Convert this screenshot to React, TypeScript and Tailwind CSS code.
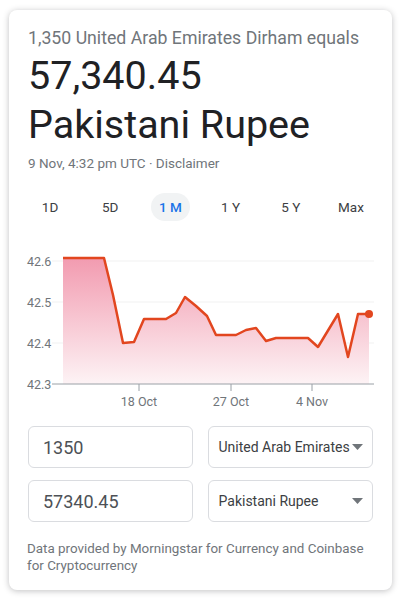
const tabs = ["1D", "5D", "1 M", "1 Y", "5 Y", "Max"];

// chart points in page coords; svg origin sits at page x=20, y=250
const pts: [number, number][] = [
  [63, 259], [104, 259], [113, 296], [123, 344], [134, 343], [144, 320],
  [166, 320], [176, 314], [185, 298], [196, 307], [207, 317], [216, 336],
  [236, 336], [246, 331], [256, 329], [266, 342], [276, 339], [308, 339],
  [318, 348], [338, 315], [348, 358], [358, 315], [369, 315],
];

const ox = 20;
const oy = 250;

function Chart() {
  const line = pts.map(([x, y]) => `${x - ox},${y - oy}`).join(" ");
  const area = `${63 - ox},${385 - oy} ${line} ${369 - ox},${385 - oy}`;
  const grid = [
    { v: "42.6", y: 262 },
    { v: "42.5", y: 303 },
    { v: "42.4", y: 344 },
  ];
  const ticks = [
    { l: "18 Oct", x: 139 },
    { l: "27 Oct", x: 231 },
    { l: "4 Nov", x: 312 },
  ];
  return (
    <svg width="361" height="165" className="block" style={{ fontFamily: "Roboto, Arial, sans-serif" }}>
      <defs>
        <linearGradient id="fill" x1="0" y1="0" x2="0" y2="1">
          <stop offset="0%" stopColor="#f29bb0" />
          <stop offset="100%" stopColor="#fdf3f5" />
        </linearGradient>
      </defs>
      {grid.map((g) => (
        <g key={g.v}>
          <line x1={52 - ox} x2={374 - ox} y1={g.y - oy} y2={g.y - oy} stroke="#f1f1f1" strokeWidth="1" />
          <text x={27 - ox} y={g.y - oy + 4.5} fontSize="12.5" fill="#70757a">{g.v}</text>
        </g>
      ))}
      <polygon points={area} fill="url(#fill)" />
      <line x1={52 - ox} x2={374 - ox} y1={385 - oy} y2={385 - oy} stroke="#9aa0a6" strokeWidth="1" />
      <text x={27 - ox} y={385 - oy + 4.5} fontSize="12.5" fill="#70757a">42.3</text>
      {ticks.map((t) => (
        <g key={t.l}>
          <line x1={t.x - ox} x2={t.x - ox} y1={385 - oy} y2={392 - oy} stroke="#9aa0a6" strokeWidth="1" />
          <text x={t.x - ox} y={407 - oy} fontSize="12.5" fill="#70757a" textAnchor="middle">{t.l}</text>
        </g>
      ))}
      <polyline points={line} fill="none" stroke="#e2461f" strokeWidth="2.5" strokeLinejoin="round" />
      <circle cx={369 - ox} cy={315 - oy} r="4" fill="#e2461f" />
    </svg>
  );
}

function Field({ value }: { value: string }) {
  return (
    <div className="flex h-[42px] w-[165px] items-center rounded-md border border-[#dadce0] px-[14px] text-[18px] text-[#4d5156]">
      {value}
    </div>
  );
}

function Select({ value }: { value: string }) {
  return (
    <div className="flex h-[42px] w-[166px] items-center justify-between rounded-md border border-[#dadce0] pl-[10px] pr-[9px] text-[14px] text-[#3c4043]">
      <span className="whitespace-nowrap">{value}</span>
      <svg width="11" height="6" viewBox="0 0 11 6" className="shrink-0">
        <polygon points="0,0 11,0 5.5,6" fill="#70757a" />
      </svg>
    </div>
  );
}

export default function App() {
  return (
    <div className="min-h-[600px] bg-white px-[9px] pt-[10px]" style={{ fontFamily: "Roboto, Arial, sans-serif" }}>
      <div className="h-[580px] w-[383px] rounded-lg bg-white shadow-[0_1px_6px_rgba(32,33,36,0.28)]">
        <div className="px-[19px] pt-[17px]">
          <div className="whitespace-nowrap text-[17.7px] leading-[22px] text-[#70757a]">1,350 United Arab Emirates Dirham equals</div>
          <div className="mt-[2px] text-[39.5px] leading-[49px] text-[#202124]">57,340.45</div>
          <div className="text-[39.5px] leading-[49px] text-[#202124]">Pakistani Rupee</div>
          <div className="mt-[4px] text-[13.5px] leading-[20px] text-[#70757a]">9 Nov, 4:32 pm UTC · Disclaimer</div>
        </div>
        <div className="mt-[20px] flex px-[11px]">
          {tabs.map((t) => (
            <div key={t} className="flex flex-1 justify-center">
              <div
                className={
                  t === "1 M"
                    ? "rounded-full bg-[#f1f3f4] px-[8px] py-[4px] text-[13.5px] font-medium text-[#1a73e8]"
                    : "px-[8px] py-[4px] text-[13.5px] text-[#3c4043]"
                }
              >
                {t}
              </div>
            </div>
          ))}
        </div>
        <div className="mt-[28px] pl-[11px]">
          <Chart />
        </div>
        <div className="mt-[12px] flex flex-col gap-[12px] px-[19px]">
          <div className="flex gap-[15px]">
            <Field value="1350" />
            <Select value="United Arab Emirates" />
          </div>
          <div className="flex gap-[15px]">
            <Field value="57340.45" />
            <Select value="Pakistani Rupee" />
          </div>
        </div>
        <div className="mt-[18px] px-[18px] text-[13.4px] leading-[17px] text-[#70757a]">
          Data provided by Morningstar for Currency and Coinbase for Cryptocurrency
        </div>
      </div>
    </div>
  );
}
